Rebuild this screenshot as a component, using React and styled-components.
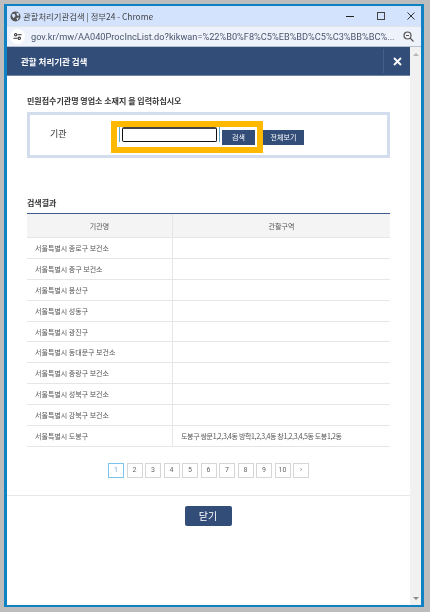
import React from "react";
import styled, { createGlobalStyle } from "styled-components";

const Global = createGlobalStyle`
  html, body { margin: 0; padding: 0; width: 430px; height: 612px; overflow: hidden; background: #bdbdbd; }
  body { font-family: "Noto Sans CJK KR", "Noto Sans", sans-serif; }
  * { box-sizing: border-box; }
`;
const Stage = styled.div`
  width: 430px; height: 612px; padding: 4px 6px 5px 4px; background: #bdbdbd;
`;
const Win = styled.div`
  width: 420px; height: 603px; border: solid #0f82c4; border-width: 2px 3px 2px 3px;
  display: flex; flex-direction: column; background: #fff; filter: blur(0.3px);
`;
const TitleBar = styled.div`
  height: 20px; flex: none; background: #d3e3fd; display: flex; align-items: center; padding-left: 3px; gap: 2px;
  font-size: 8.4px; white-space: nowrap;
`;
const TitleText = styled.span`
  flex: 1; color: #444;
`;
const Ctrl = styled.svg`
  width: 10px; height: 10px; margin-right: ${p => p.$mr}px; flex: none;
`;
const AddressBar = styled.div`
  height: 21px; flex: none; background: #eef2fb; border-top: 1px solid #dfe3ea; border-bottom: 1px solid #b9c0cc;
  display: flex; align-items: center; padding-left: 3px; gap: 6px;
`;
const Tune = styled.div`
  width: 15px; height: 15px; border-radius: 50%; background: #fff; display: flex; align-items: center; justify-content: center; flex: none;
`;
const Url = styled.span`
  font-family: "Roboto", sans-serif; font-size: 9.2px; color: #4b566e; white-space: nowrap; width: 362px;
`;
const Body = styled.div`
  flex: 1; display: flex; min-height: 0;
`;
const Main = styled.div`
  width: 403px; flex: none; display: flex; flex-direction: column;
`;
const Scroll = styled.div`
  width: 11px; flex: none; background: #f1f1f1; display: flex; flex-direction: column; justify-content: space-between; align-items: center; padding: 6px 0 5px;
`;
const Arrow = styled.div`
  width: 0; height: 0; border-left: 3px solid transparent; border-right: 3px solid transparent;
  ${p => p.$down ? "border-top: 3px solid #8a8a8a;" : "border-bottom: 3px solid #b5b5b5;"}
`;
const ModalHead = styled.div`
  height: 29px; flex: none; background: #334d79; border-bottom: 1px solid #6f83a5; display: flex; align-items: center; justify-content: space-between; padding-left: 14px;
  color: #fff; font-size: 8.5px; font-weight: 700;
`;
const HeadClose = styled.div`
  width: 27px; height: 24px; border-left: 1px solid #465e88; display: flex; align-items: center; justify-content: center;
`;
const Content = styled.div`
  padding: 19px 20px 0; flex: none;
`;
const Heading = styled.div`
  font-size: 8px; font-weight: 700; color: #333; line-height: 12px; height: 12px;
`;
const SearchBox = styled.div`
  position: relative; margin-top: 5px; height: 46px; border: 3px solid #d4dded; background: #fff; display: flex; align-items: flex-start;
  padding: 12px 0 0 20px;
`;
const Label = styled.div`
  font-size: 9px; color: #333; line-height: 13px; width: 69px; flex: none;
`;
const InputFrame = styled.div`
  width: 101px; height: 15px; flex: none; padding: 0 2px; border-left: 1px solid #5aa9c9; border-right: 1px solid #5aa9c9;
`;
const Input = styled.div`
  width: 95px; height: 15px; background: #fff; border: 1px solid #111; border-top: 2px solid #444; border-radius: 2px;
`;
const Btn = styled.button`
  height: 15px; width: ${p => p.$w}px; margin-left: ${p => p.$ml}px; margin-top: 3px; border: 0; padding: 0; background: #334d79; color: #fff; font-family: inherit; font-size: 7px; line-height: 15px; flex: none;
`;
const Highlight = styled.div`
  position: absolute; left: 81px; top: 6px; width: 152px; height: 32px; border: 6px solid #ffb900; pointer-events: none;
`;
const ResultHead = styled(Heading)`
  margin-top: 39px;
`;
const Table = styled.div`
  margin-top: 4px; border-top: 1px solid #3f5a8c; font-size: 7px; color: #555;
`;
const Row = styled.div`
  display: grid; grid-template-columns: 145px 218px; height: ${p => p.$h || 20.9}px; border-bottom: 1px solid #e6e6e6;
  background: ${p => p.$head ? "#f4f4f4" : "#fff"};
`;
const Cell = styled.div`
  display: flex; align-items: center; white-space: nowrap; overflow: hidden;
  padding-left: ${p => p.$center ? 0 : 8}px;
  justify-content: ${p => p.$center ? "center" : "flex-start"};
  & + & { border-left: 1px solid #e6e6e6; letter-spacing: -0.35px; }
`;
const HeadCell = styled(Cell)`
  & + & { letter-spacing: 0; }
`;
const Pager = styled.div`
  display: flex; justify-content: center; gap: 2.5px; margin-top: 16px;
`;
const Page = styled.div`
  width: 16px; height: 15px; display: flex; align-items: center; justify-content: center; font-family: "Roboto", sans-serif; font-size: 7px;
  border: 1px solid ${p => p.$on ? "#7cc4f0" : "#d6d6d6"}; color: ${p => p.$on ? "#6fa8dc" : "#666"};
`;
const Divider = styled.div`
  height: 1px; background: #e8e8e8; margin-top: 17px;
`;
const CloseWrap = styled.div`
  display: flex; justify-content: center; padding: 10px 1px 0 0;
`;
const CloseBtn = styled.button`
  width: 47px; height: 20px; background: #334d79; color: #fff; border: 0; border-radius: 2px; font-family: inherit; font-size: 10px; padding: 0;
`;

const rows = [
  ["서울특별시 종로구 보건소", ""],
  ["서울특별시 중구 보건소", ""],
  ["서울특별시 용산구", ""],
  ["서울특별시 성동구", ""],
  ["서울특별시 광진구", ""],
  ["서울특별시 동대문구 보건소", ""],
  ["서울특별시 중랑구 보건소", ""],
  ["서울특별시 성북구 보건소", ""],
  ["서울특별시 강북구 보건소", ""],
  ["서울특별시 도봉구", "도봉구 쌍문1,2,3,4동 방학1,2,3,4동 창1,2,3,4,5동 도봉1,2동"],
];

export default function App() {
  return (
    <Stage>
      <Global />
      <Win>
        <TitleBar>
          <svg width="11" height="11" viewBox="0 0 12 12">
            <circle cx="6" cy="6" r="5.5" fill="#555" />
            <path d="M2 3.5L5 3L6 5.5L4 8L2.5 6ZM7 1.5L10 3L9.5 5.5L7.5 4.5ZM7 7.5L10 7L8 10.5Z" fill="#d3e3fd" />
          </svg>
          <TitleText>관할처리기관검색 | 정부24 - Chrome</TitleText>
          <Ctrl $mr={19} viewBox="0 0 10 10"><path d="M1 5.5H9" stroke="#222" strokeWidth="1" /></Ctrl>
          <Ctrl $mr={18} viewBox="0 0 10 10"><rect x="1.5" y="1.5" width="7" height="7" fill="none" stroke="#444" strokeWidth="1" /></Ctrl>
          <Ctrl $mr={5} viewBox="0 0 10 10"><path d="M1.5 1.5L8.5 8.5M8.5 1.5L1.5 8.5" stroke="#333" strokeWidth="1" /></Ctrl>
        </TitleBar>
        <AddressBar>
          <Tune>
            <svg width="9" height="9" viewBox="0 0 10 10" fill="none" stroke="#333" strokeWidth="1.2">
              <circle cx="3" cy="3" r="1.3" /><path d="M5 3H9.5M0.5 7H5" /><circle cx="7" cy="7" r="1.3" />
            </svg>
          </Tune>
          <Url>gov.kr/mw/AA040ProcIncList.do?kikwan=%22%B0%F8%C5%EB%BD%C5%C3%BB%BC%...</Url>
          <svg width="11" height="11" viewBox="0 0 11 11" fill="none" stroke="#555" strokeWidth="1.2" style={{ marginLeft: 4 }}>
            <circle cx="4.5" cy="4.5" r="3.5" /><path d="M7 7L10.5 10.5M3 4.5H6" />
          </svg>
        </AddressBar>
        <Body>
          <Main>
            <ModalHead>
              관할 처리기관 검색
              <HeadClose>
                <svg width="9" height="9" viewBox="0 0 9 9"><path d="M1 1L8 8M8 1L1 8" stroke="#fff" strokeWidth="1.8" /></svg>
              </HeadClose>
            </ModalHead>
            <Content>
              <Heading>민원접수기관명 영업소 소재지 을 입력하십시오</Heading>
              <SearchBox>
                <Label>기관</Label>
                <InputFrame><Input /></InputFrame>
                <Btn $w={33} $ml={2}>검색</Btn>
                <Btn $w={41} $ml={8}>전체보기</Btn>
                <Highlight />
              </SearchBox>
              <ResultHead>검색결과</ResultHead>
              <Table>
                <Row $head $h={24}><HeadCell $center>기관명</HeadCell><HeadCell $center>관할구역</HeadCell></Row>
                {rows.map(([a, b]) => (
                  <Row key={a}><Cell>{a}</Cell><Cell>{b}</Cell></Row>
                ))}
              </Table>
            </Content>
            <Pager>
              {["1","2","3","4","5","6","7","8","9","10","›"].map((n, i) => (
                <Page key={n} $on={i === 0}>{n}</Page>
              ))}
            </Pager>
            <Divider />
            <CloseWrap><CloseBtn>닫기</CloseBtn></CloseWrap>
          </Main>
          <Scroll><Arrow /><Arrow $down /></Scroll>
        </Body>
      </Win>
    </Stage>
  );
}
